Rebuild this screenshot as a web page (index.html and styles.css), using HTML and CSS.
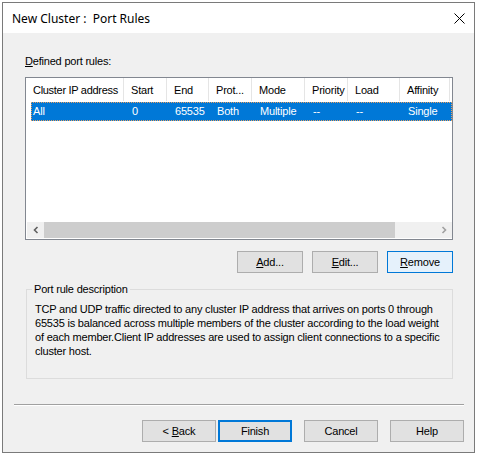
FILE: index.html
```html
<!DOCTYPE html>
<html>
<head>
<meta charset="utf-8">
<link rel="stylesheet" href="styles.css">
</head>
<body>
<div class="dialog">
  <div class="titlebar">
    <span class="title">New Cluster :  Port Rules</span>
    <svg class="close" width="11" height="11" viewBox="0 0 11 11"><path d="M0.5 0.5 L10.5 10.5 M10.5 0.5 L0.5 10.5" stroke="#000" stroke-width="1" fill="none"/></svg>
  </div>
  <div class="content">
    <div class="label"><u>D</u>efined port rules:</div>
    <div class="list">
      <div class="header">
        <div class="col c1">Cluster IP address</div>
        <div class="col c2">Start</div>
        <div class="col c3">End</div>
        <div class="col c4">Prot...</div>
        <div class="col c5">Mode</div>
        <div class="col c6">Priority</div>
        <div class="col c7">Load</div>
        <div class="col c8">Affinity</div>
      </div>
      <div class="row selected">
        <div class="cell c1">All</div>
        <div class="cell c2">0</div>
        <div class="cell c3">65535</div>
        <div class="cell c4">Both</div>
        <div class="cell c5">Multiple</div>
        <div class="cell c6">--</div>
        <div class="cell c7">--</div>
        <div class="cell c8">Single</div>
      </div>
      <div class="list-space"></div>
      <div class="hscroll">
        <div class="arrow"><svg width="8" height="8" viewBox="0 0 8 8"><path d="M5.5 1 L2.5 4 L5.5 7" stroke="#606060" stroke-width="1.6" fill="none"/></svg></div>
        <div class="thumb"></div>
        <div class="track"></div>
        <div class="arrow"><svg width="8" height="8" viewBox="0 0 8 8"><path d="M2.5 1 L5.5 4 L2.5 7" stroke="#a0a0a0" stroke-width="1.6" fill="none"/></svg></div>
      </div>
    </div>
    <div class="btnrow">
      <button class="btn"><u>A</u>dd...</button>
      <button class="btn"><u>E</u>dit...</button>
      <button class="btn hot"><u>R</u>emove</button>
    </div>
    <fieldset class="group">
      <legend>Port rule description</legend>
      <p class="desc">TCP and UDP traffic directed to any cluster IP address that arrives on ports 0 through<br>65535 is balanced across multiple members of the cluster according to the load weight<br>of each member.Client IP addresses are used to assign client connections to a specific<br>cluster host.</p>
    </fieldset>
  </div>
  <div class="separator"></div>
  <div class="footer">
    <button class="btn wide">&lt; <u>B</u>ack</button>
    <button class="btn wide default">Finish</button>
    <button class="btn wide gap">Cancel</button>
    <button class="btn wide gap">Help</button>
  </div>
</div>
</body>
</html>
```
FILE: styles.css
```css
html, body {
  margin: 0;
  padding: 0;
  background: #ffffff;
}
body {
  padding: 2px;
  font-family: "Liberation Sans", Arial, sans-serif;
  font-size: 11px;
  letter-spacing: -0.2px;
  color: #000;
}
.dialog {
  width: 471px;
  height: 449px;
  border: 1px solid #7a7a7a;
  background: #f0f0f0;
  display: flex;
  flex-direction: column;
}
.titlebar {
  height: 30px;
  background: #fff;
  display: flex;
  align-items: center;
  justify-content: space-between;
  padding: 0 9px 0 9px;
  flex: none;
}
.title {
  white-space: pre;
  font-family: "Noto Sans", "Liberation Sans", sans-serif;
  font-size: 12px;
  letter-spacing: 0;
  color: #000;
  margin-top: 1px;
}
.close {
  margin-top: 1px;
}
.content {
  padding: 0 21px 0 22px;
}
.label {
  margin-top: 22px;
  line-height: 13px;
  height: 13px;
}
.list {
  margin-top: 9px;
  height: 161px;
  border: 1px solid #828790;
  background: #fff;
  display: flex;
  flex-direction: column;
}
.header {
  display: flex;
  height: 23px;
}
.col {
  box-sizing: border-box;
  height: 23px;
  line-height: 13px;
  padding: 6px 0 0 7px;
  border-right: 1px solid #e5e5e5;
  white-space: nowrap;
  overflow: hidden;
}
.header .c1 { letter-spacing: -0.3px; }
.c1 { width: 98px; }
.c2 { width: 43px; }
.c3 { width: 42px; }
.c4 { width: 43px; }
.c5 { width: 53px; }
.c6 { width: 43px; }
.c7 { width: 52px; }
.c8 { width: 50px; }
.row {
  display: flex;
  height: 19px;
  margin-top: 1px;
  margin-left: 5px;
  box-sizing: border-box;
}
.row.selected {
  background: #0078d7;
  color: #fff;
  border: 1px dotted #e8a060;
}
.row .cell {
  box-sizing: border-box;
  line-height: 13px;
  padding: 2px 0 0 7px;
  white-space: nowrap;
}
.row .c1 { width: 93px; padding-left: 1px; }
.list-space {
  flex: 1;
}
.hscroll {
  height: 16px;
  margin: 0 0 1px 1px;
  display: flex;
}
.arrow {
  width: 17px;
  background: #f0f0f0;
  display: flex;
  align-items: center;
  justify-content: center;
}
.thumb {
  width: 351px;
  background: #cdcdcd;
}
.track {
  flex: 1;
  background: #f0f0f0;
}
.btnrow {
  display: flex;
  justify-content: flex-end;
  gap: 9px;
  margin-top: 11px;
  padding-right: 0;
}
.btn {
  box-sizing: border-box;
  width: 66px;
  height: 22px;
  background: #e1e1e1;
  border: 1px solid #adadad;
  font-family: "Liberation Sans", Arial, sans-serif;
  font-size: 11px;
  letter-spacing: -0.2px;
  color: #000;
  padding: 0;
  margin: 0;
  line-height: 13px;
}
.btn.hot {
  background: #e5f1fb;
  border-color: #0078d7;
}
.group {
  margin: 10px 0 0 1px;
  padding: 0 0 0 8px;
  height: 96px;
  box-sizing: border-box;
  border: 1px solid #dcdcdc;
  min-width: 0;
}
.group legend {
  padding: 0 2px;
  margin-left: -3px;
  line-height: 13px;
}
.desc {
  margin: 6px 0 0 0;
  line-height: 14px;
  white-space: nowrap;
}
.separator {
  margin: 25px 10px 0 11px;
  height: 1px;
  background: #a0a0a0;
  border-bottom: 1px solid #ffffff;
  flex: none;
}
.footer {
  display: flex;
  justify-content: flex-end;
  padding-right: 10px;
  margin-top: 14px;
}
.btn.wide {
  width: 74px;
}
.btn.default {
  border: 2px solid #0078d7;
  margin-left: 2px;
}
.btn.gap {
  margin-left: 12px;
}
```
